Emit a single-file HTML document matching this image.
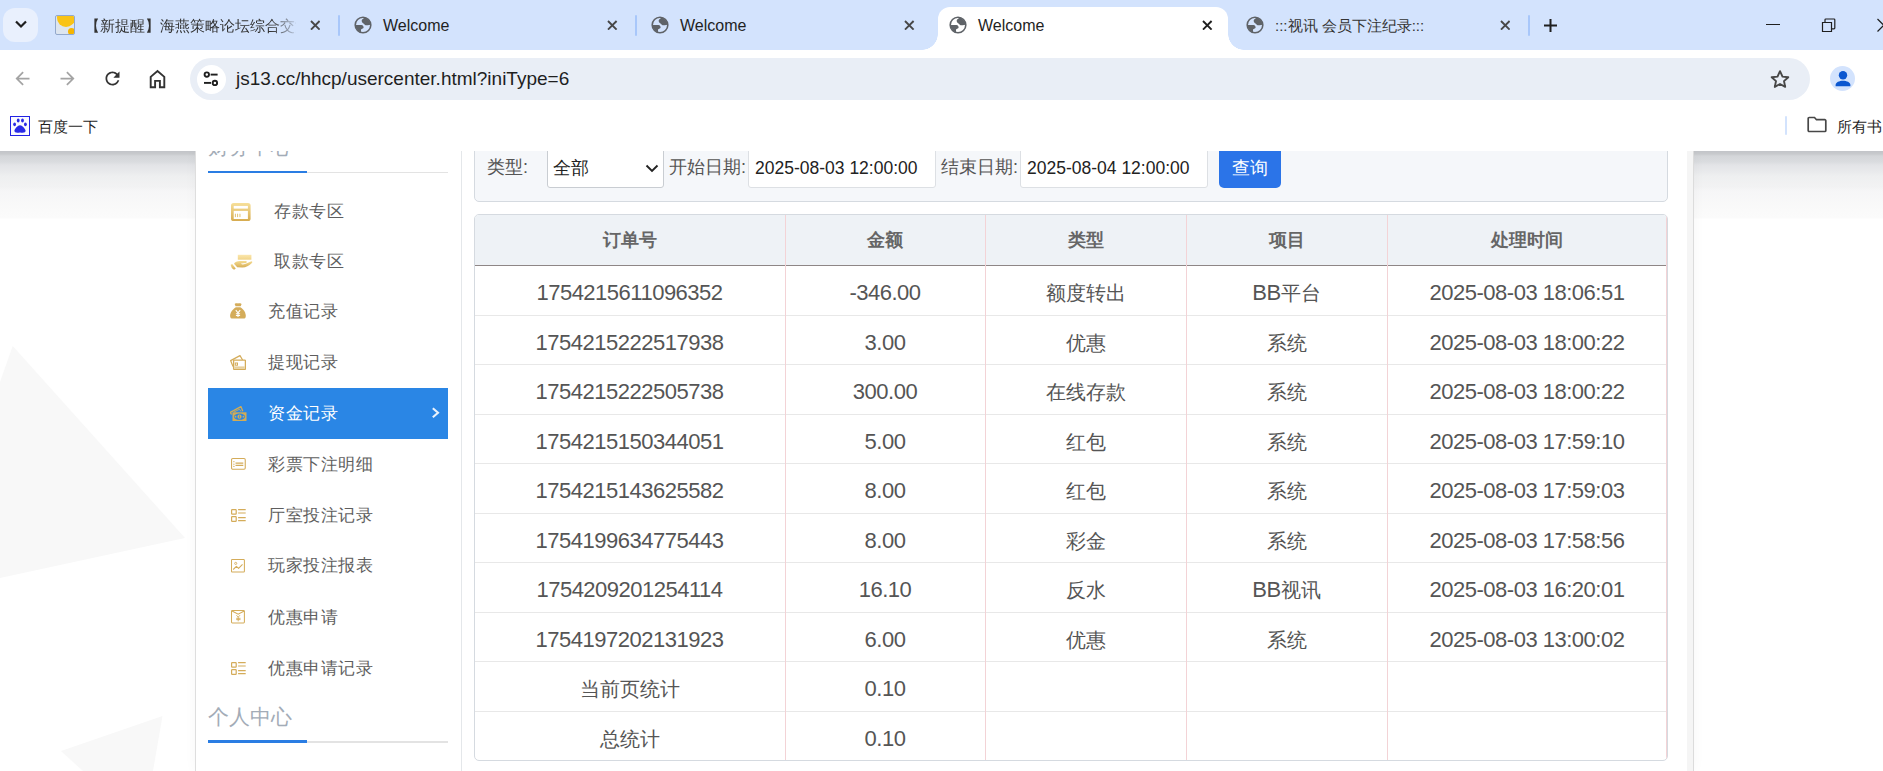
<!DOCTYPE html>
<html><head><meta charset="utf-8">
<style>
*{margin:0;padding:0;box-sizing:border-box}
html,body{width:1883px;height:771px;overflow:hidden;background:#fff;font-family:"Liberation Sans",sans-serif}
.abs{position:absolute}
#tabbar{position:absolute;left:0;top:0;width:1883px;height:50px;background:#d3e3fd}
.tabtxt{position:absolute;top:16px;font-size:16px;line-height:20px;color:#1f1f1f;white-space:nowrap}
.sep{position:absolute;top:15px;width:2px;height:21px;background:#a8c7fa;border-radius:1px}
#toolbar{position:absolute;left:0;top:50px;width:1883px;height:58px}
#omni{position:absolute;left:190px;top:58px;width:1620px;height:42px;border-radius:21px;background:#e9eef6}
#page{position:absolute;left:0;top:151px;width:1883px;height:620px;background:#fff;overflow:hidden}
.menu{position:absolute;font-size:17px;letter-spacing:0.6px;line-height:22px;color:#555;white-space:nowrap}
.cj{font-size:20px;letter-spacing:0}
.cell{position:absolute;text-align:center;font-size:22px;letter-spacing:-0.5px;line-height:24px;color:#555;white-space:nowrap}
</style></head><body>
<div id="tabbar">
<div class="abs" style="left:3px;top:8px;width:35px;height:34px;border-radius:12px;background:#e9f0fd"></div>
<svg class="abs" style="left:14px;top:19px" width="14" height="10" viewBox="0 0 14 10"><path d="M2 2.5 L7 7.5 L12 2.5" fill="none" stroke="#1f1f1f" stroke-width="2.2"/></svg>
<div class="abs" style="left:55px;top:15px;width:20px;height:20px;border:1px solid #93a9cc;border-radius:2px;background:#dde5ef;overflow:hidden">
<div class="abs" style="left:1px;top:-7px;width:18px;height:18px;border-radius:9px;background:#f9c316"></div>
<div class="abs" style="left:12px;top:12px;width:7px;height:7px;border-radius:4px;background:#f6b500"></div></div>
<div class="tabtxt" style="left:85px;font-size:15px;width:211px;color:#333;overflow:hidden;-webkit-mask-image:linear-gradient(90deg,#000 88%,rgba(0,0,0,0.15) 100%)">【新提醒】海燕策略论坛综合交流</div>
<svg class="abs" style="left:309.7px;top:19.7px" width="10.6" height="10.6" viewBox="0 0 10.6 10.6"><path d="M1 1L9.6 9.6M9.6 1L1 9.6" stroke="#474747" stroke-width="1.9"/></svg>
<div class="sep" style="left:338.3px"></div>
<svg class="abs" style="left:354.0px;top:16.0px" width="18" height="18" viewBox="0 0 18 18"><defs><clipPath id="gc"><circle cx="9" cy="9" r="7.6"/></clipPath></defs><circle cx="9" cy="9" r="7.8" fill="none" stroke="#5f6368" stroke-width="1.6"/><g clip-path="url(#gc)" fill="#5f6368"><path d="M9.8 0V2.3C9 3 7.8 3.4 7.7 4.6 7.6 6 8.6 7 9.5 7.5 10.3 8 10.8 9 11.7 9.2 12.8 9.5 14 9.3 15 9.1L18 8.5V0Z"/><path d="M0 9.1H7.5C8.8 9.3 9.6 10.3 9.6 11.5 9.6 12.3 8.8 12.6 8.2 12.7 7.3 12.9 7 13.4 7 14.2V18H0Z"/></g></svg>
<div class="tabtxt" style="left:383px">Welcome</div>
<svg class="abs" style="left:607.2px;top:19.7px" width="10.6" height="10.6" viewBox="0 0 10.6 10.6"><path d="M1 1L9.6 9.6M9.6 1L1 9.6" stroke="#474747" stroke-width="1.9"/></svg>
<svg class="abs" style="left:651.0px;top:16.0px" width="18" height="18" viewBox="0 0 18 18"><defs><clipPath id="gc"><circle cx="9" cy="9" r="7.6"/></clipPath></defs><circle cx="9" cy="9" r="7.8" fill="none" stroke="#5f6368" stroke-width="1.6"/><g clip-path="url(#gc)" fill="#5f6368"><path d="M9.8 0V2.3C9 3 7.8 3.4 7.7 4.6 7.6 6 8.6 7 9.5 7.5 10.3 8 10.8 9 11.7 9.2 12.8 9.5 14 9.3 15 9.1L18 8.5V0Z"/><path d="M0 9.1H7.5C8.8 9.3 9.6 10.3 9.6 11.5 9.6 12.3 8.8 12.6 8.2 12.7 7.3 12.9 7 13.4 7 14.2V18H0Z"/></g></svg>
<div class="tabtxt" style="left:680px">Welcome</div>
<svg class="abs" style="left:904.2px;top:19.7px" width="10.6" height="10.6" viewBox="0 0 10.6 10.6"><path d="M1 1L9.6 9.6M9.6 1L1 9.6" stroke="#474747" stroke-width="1.9"/></svg>
<div class="sep" style="left:635.4px"></div>
<div class="abs" style="left:938px;top:7px;width:290px;height:43px;background:#fff;border-radius:12px 12px 0 0"></div>
<div class="abs" style="left:922px;top:34px;width:16px;height:16px;background:radial-gradient(circle at 0 0, #d3e3fd 15.5px, #fff 16px)"></div>
<div class="abs" style="left:1228px;top:34px;width:16px;height:16px;background:radial-gradient(circle at 100% 0, #d3e3fd 15.5px, #fff 16px)"></div>
<svg class="abs" style="left:949.0px;top:16.0px" width="18" height="18" viewBox="0 0 18 18"><defs><clipPath id="gc"><circle cx="9" cy="9" r="7.6"/></clipPath></defs><circle cx="9" cy="9" r="7.8" fill="none" stroke="#5f6368" stroke-width="1.6"/><g clip-path="url(#gc)" fill="#5f6368"><path d="M9.8 0V2.3C9 3 7.8 3.4 7.7 4.6 7.6 6 8.6 7 9.5 7.5 10.3 8 10.8 9 11.7 9.2 12.8 9.5 14 9.3 15 9.1L18 8.5V0Z"/><path d="M0 9.1H7.5C8.8 9.3 9.6 10.3 9.6 11.5 9.6 12.3 8.8 12.6 8.2 12.7 7.3 12.9 7 13.4 7 14.2V18H0Z"/></g></svg>
<div class="tabtxt" style="left:978px">Welcome</div>
<svg class="abs" style="left:1202.1px;top:19.7px" width="10.6" height="10.6" viewBox="0 0 10.6 10.6"><path d="M1 1L9.6 9.6M9.6 1L1 9.6" stroke="#1f1f1f" stroke-width="1.9"/></svg>
<svg class="abs" style="left:1246.0px;top:16.0px" width="18" height="18" viewBox="0 0 18 18"><defs><clipPath id="gc"><circle cx="9" cy="9" r="7.6"/></clipPath></defs><circle cx="9" cy="9" r="7.8" fill="none" stroke="#5f6368" stroke-width="1.6"/><g clip-path="url(#gc)" fill="#5f6368"><path d="M9.8 0V2.3C9 3 7.8 3.4 7.7 4.6 7.6 6 8.6 7 9.5 7.5 10.3 8 10.8 9 11.7 9.2 12.8 9.5 14 9.3 15 9.1L18 8.5V0Z"/><path d="M0 9.1H7.5C8.8 9.3 9.6 10.3 9.6 11.5 9.6 12.3 8.8 12.6 8.2 12.7 7.3 12.9 7 13.4 7 14.2V18H0Z"/></g></svg>
<div class="tabtxt" style="left:1275px;font-size:15px;color:#333;top:15.5px">:::视讯 会员下注纪录:::</div>
<svg class="abs" style="left:1499.7px;top:19.7px" width="10.6" height="10.6" viewBox="0 0 10.6 10.6"><path d="M1 1L9.6 9.6M9.6 1L1 9.6" stroke="#474747" stroke-width="1.9"/></svg>
<div class="sep" style="left:1528.2px"></div>
<svg class="abs" style="left:1543px;top:18px" width="15" height="15" viewBox="0 0 15 15"><path d="M7.5 1V14M1 7.5H14" stroke="#1f1f1f" stroke-width="2"/></svg>
<div class="abs" style="left:1766px;top:24px;width:14px;height:1.2px;background:#1f1f1f"></div>
<svg class="abs" style="left:1820px;top:17px" width="17" height="16" viewBox="0 0 17 16"><path d="M2.5 5.5h9v9h-9z M5 5.5V2.8a0.8 0.8 0 0 1 .8-.8H14a0.8 0.8 0 0 1 .8.8v8.2a.8.8 0 0 1-.8.8h-2.5" fill="none" stroke="#1f1f1f" stroke-width="1.2"/></svg>
<svg class="abs" style="left:1876px;top:18px" width="16" height="15" viewBox="0 0 16 15"><path d="M1.5 1L14 13.5M14 1L1.5 13.5" stroke="#1f1f1f" stroke-width="1.2"/></svg>
</div>
<svg class="abs" style="left:12px;top:67.5px" width="21" height="21" viewBox="0 0 24 24"><path d="M20 11H7.83l5.59-5.59L12 4l-8 8 8 8 1.41-1.41L7.83 13H20v-2z" fill="#a4a4a4"/></svg>
<svg class="abs" style="left:56.5px;top:67.5px" width="21" height="21" viewBox="0 0 24 24"><path d="M12 4l-1.41 1.41L16.17 11H4v2h12.17l-5.58 5.59L12 20l8-8z" fill="#a4a4a4"/></svg>
<svg class="abs" style="left:102px;top:67.5px" width="21" height="21" viewBox="0 0 24 24"><path d="M17.65 6.35C16.2 4.9 14.21 4 12 4c-4.42 0-7.99 3.58-7.99 8s3.57 8 7.99 8c3.73 0 6.84-2.55 7.73-6h-2.08c-.82 2.33-3.04 4-5.65 4-3.31 0-6-2.69-6-6s2.69-6 6-6c1.66 0 3.14.69 4.22 1.78L13 11h7V4l-2.35 2.35z" fill="#333"/></svg>
<svg class="abs" style="left:148px;top:69px" width="19" height="20" viewBox="0 0 19 20"><path d="M2.7 18.2V7.9L9.5 2 16.3 7.9V18.2H11.9V11.9H7.1V18.2Z" fill="none" stroke="#333" stroke-width="1.9" stroke-linejoin="miter"/></svg>
</div>
<div id="omni"></div>
<div class="abs" style="left:196.5px;top:64.5px;width:29px;height:29px;border-radius:15px;background:#fff"></div>
<svg class="abs" style="left:202px;top:70px" width="18" height="18" viewBox="0 0 18 18"><circle cx="4.8" cy="4.6" r="2.2" fill="none" stroke="#1f1f1f" stroke-width="1.9"/><path d="M8.6 4.6H15.6" stroke="#1f1f1f" stroke-width="1.9"/><circle cx="12.9" cy="12.9" r="2.2" fill="none" stroke="#1f1f1f" stroke-width="1.9"/><path d="M2 12.9H9.1" stroke="#1f1f1f" stroke-width="1.9"/></svg>
<div class="abs" style="left:236px;top:68px;font-size:19px;line-height:22px;color:#1f1f1f;white-space:nowrap">js13.cc/hhcp/usercenter.html?iniType=6</div>
<svg class="abs" style="left:1769px;top:69px" width="22" height="21" viewBox="0 0 22 21"><path d="M11 2.2L13.5 7.6 19.3 8.2 15 12.1 16.2 17.9 11 15 5.8 17.9 7 12.1 2.7 8.2 8.5 7.6Z" fill="none" stroke="#474747" stroke-width="1.9" stroke-linejoin="round"/></svg>
<div class="abs" style="left:1830px;top:66px;width:25px;height:25px;border-radius:13px;background:#d3e3fd"></div>
<svg class="abs" style="left:1832.5px;top:66.5px" width="20" height="22" viewBox="0 0 20 22"><circle cx="10" cy="8.2" r="4.2" fill="#0b57d0"/><path d="M2.6 19.2v-1.3c0-2.6 3.8-4.2 7.4-4.2s7.4 1.6 7.4 4.2v1.3z" fill="#0b57d0"/></svg>
<div class="abs" style="left:10px;top:116px;width:20px;height:20px;border:1.6px solid #2222e4;background:#fafaff"></div>
<svg class="abs" style="left:10px;top:116px" width="20" height="20" viewBox="0 0 20 20"><ellipse cx="4.6" cy="8.3" rx="1.4" ry="1.9" fill="#2a2ae6"/><ellipse cx="8.2" cy="4.5" rx="1.4" ry="1.9" fill="#2a2ae6"/><ellipse cx="12.5" cy="4.5" rx="1.4" ry="1.9" fill="#2a2ae6"/><ellipse cx="15.4" cy="8.3" rx="1.4" ry="1.9" fill="#2a2ae6"/><path d="M10 9.2c-2 0-5.6 3.6-5.6 5.6 0 1.7 1.8 2.4 5.6 1.7 3.8.7 5.6 0 5.6-1.7 0-2-3.6-5.6-5.6-5.6z" fill="#2a2ae6"/></svg>
<div class="abs" style="left:38px;top:117px;font-size:15px;line-height:20px;color:#1f1f1f;white-space:nowrap">百度一下</div>
<div class="abs" style="left:1785px;top:116px;width:2px;height:19px;background:#d3e3fd;border-radius:1px"></div>
<svg class="abs" style="left:1806px;top:116px" width="22" height="18" viewBox="0 0 22 18"><path d="M2.2 2.5a1 1 0 0 1 1-1h5.3l2 2.2h8.3a1 1 0 0 1 1 1v9.8a1 1 0 0 1-1 1H3.2a1 1 0 0 1-1-1z" fill="none" stroke="#474747" stroke-width="1.7"/></svg>
<div class="abs" style="left:1837px;top:117px;font-size:15px;line-height:20px;color:#1f1f1f;white-space:nowrap">所有书</div>
<div id="page">
<div class="abs" style="left:0;top:0;width:1883px;height:68px;background:linear-gradient(#c2c4c8 0px,#c8cacd 3px,#d4d6d9 5px,#dadcdf 11px,#e3e4e7 14px,#e9eaec 21px,#eeeff0 25px,#f2f2f3 36px,#f6f6f7 40px,#fafafa 60px,#fbfbfb 67px,#fff 68px)"></div>
<svg class="abs" style="left:0;top:0" width="200" height="620" viewBox="0 151 200 620"><path d="M12.7 346L185 538L0 578L0 382Z" fill="#f8f8f8"/><path d="M61 751L162.5 716L149.7 790L103.9 790Z" fill="#f8f8f8"/></svg>
<div class="abs" style="left:195px;top:0;width:1499px;height:620px;background:#fff;border-left:1px solid #dedede;border-right:1px solid #dcdcdc;box-shadow:0 0 12px rgba(0,0,0,0.035)"></div>
<div class="abs" style="left:1687px;top:0;width:6px;height:620px;background:#f5f5f5"></div>
<div class="abs" style="left:461px;top:0;width:1px;height:620px;background:#e4e7ea"></div>
<div class="abs" style="left:208px;top:-16px;font-size:21px;line-height:24px;color:#a3acb7;white-space:nowrap">财务中心</div>
<div class="abs" style="left:208px;top:20.6px;width:240px;height:1.6px;background:#e3e3e3"></div>
<div class="abs" style="left:208px;top:19.8px;width:99px;height:2.4px;background:#2a7de3"></div>
<div class="abs" style="left:208px;top:553.5px;font-size:21px;line-height:24px;color:#a3acb7;white-space:nowrap">个人中心</div>
<div class="abs" style="left:208px;top:590.1px;width:240px;height:1.6px;background:#e3e3e3"></div>
<div class="abs" style="left:208px;top:589.3px;width:99px;height:2.4px;background:#2a7de3"></div>
<div class="abs" style="left:208px;top:237px;width:240px;height:51px;background:#2a86e5"></div>
<svg class="abs" style="left:431px;top:255px" width="9" height="13" viewBox="0 0 9 13"><path d="M1.8 2.3L7 6.8L1.8 11.3" fill="none" stroke="#eaf2fc" stroke-width="2.1"/></svg>
<div class="abs" style="left:231.3px;top:52.099999999999994px;line-height:0"><svg width="20" height="19" viewBox="0 0 20 19"><defs><linearGradient id="g1" x1="0" y1="0" x2="0" y2="1"><stop offset="0" stop-color="#f7e09a"/><stop offset="1" stop-color="#d6ab4f"/></linearGradient></defs><rect x="0" y="0" width="19.6" height="18.1" rx="2.6" fill="url(#g1)"/><rect x="2.7" y="2.9" width="14.2" height="2.7" fill="#fff"/><rect x="2.7" y="7.9" width="14.2" height="8.1" fill="#fff"/><rect x="3.9" y="10.5" width="0.9" height="3.7" rx="0.4" fill="#dcb95f"/><rect x="6.2" y="10.5" width="0.9" height="3.7" rx="0.4" fill="#dcb95f"/><rect x="8.5" y="10.5" width="0.9" height="3.7" rx="0.4" fill="#dcb95f"/></svg></div>
<div class="menu" style="left:274px;top:49.5px;color:#5e5e5e">存款专区</div>
<div class="abs" style="left:229.5px;top:102px;line-height:0"><svg width="23" height="18" viewBox="0 0 23 18"><defs><linearGradient id="g2" x1="0" y1="0" x2="0" y2="1"><stop offset="0" stop-color="#f5dc92"/><stop offset="1" stop-color="#d6ad55"/></linearGradient><linearGradient id="g3" x1="0" y1="0" x2="0" y2="1"><stop offset="0" stop-color="#fbe7ad"/><stop offset="1" stop-color="#f1d488"/></linearGradient></defs><rect x="7.8" y="1.8" width="13.6" height="4.9" fill="url(#g3)"/><path d="M4 10.8C5 8.9 7 8 10 8H15.8C17 8 17.2 9.6 16 9.9L11 10.6C11.6 11.6 13 11.7 15 11.1 17.5 10.3 19.8 8.6 21.8 8.3 22.6 8.7 22.4 9.6 21.6 10.3 19 12.6 16 14.6 12.5 14.6L7.2 14.2Z" fill="url(#g2)"/><path d="M0.7 11.7L2.2 10.9 5.8 15.4 4.6 16.6C3 16.8 1 14.3 0.7 11.7Z" fill="url(#g2)"/></svg></div>
<div class="menu" style="left:274px;top:100px;color:#5e5e5e">取款专区</div>
<div class="abs" style="left:230px;top:152px;line-height:0"><svg width="16" height="16" viewBox="0 0 16 16"><path d="M4.6 0.9C5.8 0.1 7.3 0.3 8 0.4 8.7 0.3 10.2 0.1 11.6 0.9L10.7 3.3H5.6Z" fill="#d4ac5a"/><path d="M5.9 4.3H10.3C13.6 6 15.8 9.8 15.8 12.9 15.8 15 14.8 15.6 13 15.6H3C1.2 15.6 0.1 15 0.1 12.9 0.1 9.8 2.6 6 5.9 4.3Z" fill="#d4ac5a"/><path d="M5.8 7.2L8 9.8 10.2 7.2M8 9.8V13.9M5.9 10.8H10.1M5.9 12.5H10.1" stroke="#fff" stroke-width="1.1" fill="none"/></svg></div>
<div class="menu" style="left:268px;top:149.5px;color:#5e5e5e">充值记录</div>
<div class="abs" style="left:230px;top:204px;line-height:0"><svg width="16" height="15" viewBox="0 0 16 15"><path d="M3 11.5L0.6 5.6 10 0.6 12.6 5" fill="none" stroke="#d4ac5a" stroke-width="1.2" stroke-linejoin="round"/><rect x="3.6" y="5.2" width="11.8" height="9.2" rx="0.6" fill="#fff" stroke="#d4ac5a" stroke-width="1.3"/><rect x="5.3" y="8" width="2.2" height="2.2" fill="none" stroke="#d4ac5a" stroke-width="1"/><rect x="4.3" y="11.4" width="10.4" height="2.4" fill="#e6cf9c"/></svg></div>
<div class="menu" style="left:268px;top:200.5px;color:#5e5e5e">提现记录</div>
<div class="abs" style="left:230px;top:254.5px;line-height:0"><svg width="17" height="16" viewBox="0 0 17 16"><path d="M1.6 8.5L0.3 6.4 10.9 0.6 12.8 5.2" fill="none" stroke="#d3ac54" stroke-width="1.3" stroke-linejoin="round"/><path d="M4 6L9.5 3.2 11 5.5" fill="none" stroke="#d3ac54" stroke-width="0.9"/><rect x="2.5" y="6.3" width="14" height="8.7" fill="#d3ac54"/><ellipse cx="9.5" cy="10.65" rx="5.6" ry="3.2" fill="#2a86e5"/><circle cx="9.5" cy="10.65" r="2.1" fill="#d3ac54"/><path d="M9.5 9.4V11.9" stroke="#2a86e5" stroke-width="0.7"/><circle cx="5.5" cy="10.65" r="0.9" fill="#d3ac54"/><circle cx="13.5" cy="10.65" r="0.9" fill="#d3ac54"/></svg></div>
<div class="menu" style="left:268px;top:251.5px;color:#fff">资金记录</div>
<div class="abs" style="left:230.9px;top:307.1px;line-height:0"><svg width="16" height="13" viewBox="0 0 16 13"><rect x="0.55" y="0.55" width="13.7" height="10.7" rx="1.2" fill="none" stroke="#d4ac5a" stroke-width="1.1"/><path d="M4.5 5.1H12.3M4.5 7.4H12.3" stroke="#d4ac5a" stroke-width="1.1"/><circle cx="2.9" cy="3.7" r="0.65" fill="#d4ac5a"/><circle cx="2.9" cy="6.2" r="0.65" fill="#d4ac5a"/><circle cx="2.9" cy="8.4" r="0.65" fill="#d4ac5a"/></svg></div>
<div class="menu" style="left:268px;top:303px;color:#5e5e5e">彩票下注明细</div>
<div class="abs" style="left:230.9px;top:357.9px;line-height:0"><svg width="16" height="14" viewBox="0 0 16 14"><rect x="0.6" y="0.6" width="4.6" height="4.6" rx="0.6" fill="none" stroke="#d4ac5a" stroke-width="1.2"/><rect x="0.6" y="7.6" width="4.6" height="4.8" rx="0.6" fill="none" stroke="#d4ac5a" stroke-width="1.2"/><path d="M7.1 0.7H14.7M7.1 4H14.7M7.1 8.6H14.7M7.1 11.6H14.7" stroke="#d4ac5a" stroke-width="1.2"/></svg></div>
<div class="menu" style="left:268px;top:353.5px;color:#5e5e5e">厅室投注记录</div>
<div class="abs" style="left:231px;top:408.1px;line-height:0"><svg width="15" height="14" viewBox="0 0 15 14"><rect x="0.5" y="0.5" width="12.9" height="12.5" rx="0.8" fill="none" stroke="#d4ac5a" stroke-width="1.05"/><path d="M2.2 10.5L5.4 7.4 7.6 9.4 11.5 5.4" fill="none" stroke="#d4ac5a" stroke-width="1.05" stroke-linejoin="round"/><circle cx="4.7" cy="4.4" r="1.05" fill="none" stroke="#d4ac5a" stroke-width="0.9"/></svg></div>
<div class="menu" style="left:268px;top:404px;color:#5e5e5e">玩家投注报表</div>
<div class="abs" style="left:231px;top:459.20000000000005px;line-height:0"><svg width="15" height="14" viewBox="0 0 15 14"><rect x="0.5" y="0.5" width="12.9" height="12.4" rx="0.8" fill="none" stroke="#d4ac5a" stroke-width="1.05"/><path d="M1 1L7.2 4.2 13.2 1" fill="none" stroke="#d4ac5a" stroke-width="1.05"/><path d="M5.4 5.2L7.2 7.1 9 5.2M7.2 7.1V11.3M5.2 8.3H9.5M5.2 9.6H9.5" fill="none" stroke="#d4ac5a" stroke-width="0.9"/></svg></div>
<div class="menu" style="left:268px;top:455.5px;color:#5e5e5e">优惠申请</div>
<div class="abs" style="left:230.9px;top:510.6px;line-height:0"><svg width="16" height="14" viewBox="0 0 16 14"><rect x="0.6" y="0.6" width="4.6" height="4.6" rx="0.6" fill="none" stroke="#d4ac5a" stroke-width="1.2"/><rect x="0.6" y="7.6" width="4.6" height="4.8" rx="0.6" fill="none" stroke="#d4ac5a" stroke-width="1.2"/><path d="M7.1 0.7H14.7M7.1 4H14.7M7.1 8.6H14.7M7.1 11.6H14.7" stroke="#d4ac5a" stroke-width="1.2"/></svg></div>
<div class="menu" style="left:268px;top:506.5px;color:#5e5e5e">优惠申请记录</div>
<div class="abs" style="left:474px;top:-10px;width:1194px;height:61px;background:#f5f7fa;border:1px solid #d5dae0;border-radius:5px"></div>
<div class="abs" style="left:487px;top:5px;font-size:18px;line-height:22px;color:#555;white-space:nowrap">类型:</div>
<div class="abs" style="left:547px;top:-10px;width:117px;height:47px;background:#fff;border:1px solid #c9cdd2;border-radius:3px"></div>
<div class="abs" style="left:553px;top:6px;font-size:18px;line-height:22px;color:#222;white-space:nowrap">全部</div>
<svg class="abs" style="left:645px;top:13px" width="14" height="9" viewBox="0 0 14 9"><path d="M1.5 1.5L7 7L12.5 1.5" fill="none" stroke="#222" stroke-width="1.9"/></svg>
<div class="abs" style="left:669px;top:5px;font-size:18px;line-height:22px;color:#555;white-space:nowrap">开始日期:</div>
<div class="abs" style="left:748px;top:-10px;width:188px;height:47px;background:#fff;border:1px solid #dde0e4;border-radius:3px"></div>
<div class="abs" style="left:755px;top:6px;font-size:17.5px;line-height:22px;color:#222;white-space:nowrap">2025-08-03 12:00:00</div>
<div class="abs" style="left:941px;top:5px;font-size:18px;line-height:22px;color:#555;white-space:nowrap">结束日期:</div>
<div class="abs" style="left:1020px;top:-10px;width:188px;height:47px;background:#fff;border:1px solid #dde0e4;border-radius:3px"></div>
<div class="abs" style="left:1027px;top:6px;font-size:17.5px;line-height:22px;color:#222;white-space:nowrap">2025-08-04 12:00:00</div>
<div class="abs" style="left:1219px;top:-10px;width:62px;height:47px;background:#2b74e8;border-radius:5px"></div>
<div class="abs" style="left:1232px;top:6px;font-size:18px;line-height:22px;color:#fff;white-space:nowrap">查询</div>
<div class="abs" style="left:474px;top:63px;width:1194px;height:547px;border:1px solid #d5dae0;border-radius:5px;overflow:hidden;background:#fff">
<div class="abs" style="left:0;top:0;width:1192px;height:50px;background:#eef2f6"></div>
<div class="abs" style="left:0;top:50px;width:1192px;height:1px;background:#8e8686"></div>
<div class="abs" style="left:0;top:99.5px;width:1192px;height:1px;background:#e8e8e8"></div>
<div class="abs" style="left:0;top:149.0px;width:1192px;height:1px;background:#e8e8e8"></div>
<div class="abs" style="left:0;top:198.5px;width:1192px;height:1px;background:#e8e8e8"></div>
<div class="abs" style="left:0;top:248.0px;width:1192px;height:1px;background:#e8e8e8"></div>
<div class="abs" style="left:0;top:297.5px;width:1192px;height:1px;background:#e8e8e8"></div>
<div class="abs" style="left:0;top:347.0px;width:1192px;height:1px;background:#e8e8e8"></div>
<div class="abs" style="left:0;top:396.5px;width:1192px;height:1px;background:#e8e8e8"></div>
<div class="abs" style="left:0;top:446.0px;width:1192px;height:1px;background:#e8e8e8"></div>
<div class="abs" style="left:0;top:495.5px;width:1192px;height:1px;background:#e8e8e8"></div>
<div class="abs" style="left:310px;top:0;width:1px;height:547px;background:#f3d3d6"></div>
<div class="abs" style="left:510px;top:0;width:1px;height:547px;background:#f3d3d6"></div>
<div class="abs" style="left:711px;top:0;width:1px;height:547px;background:#f3d3d6"></div>
<div class="abs" style="left:912px;top:0;width:1px;height:547px;background:#f3d3d6"></div>
<div class="abs" style="left:1191px;top:0;width:1px;height:547px;background:#f3d3d6"></div>
</div>
<div class="cell" style="left:474px;width:311px;top:77px;font-size:18.2px;letter-spacing:0;font-weight:bold;color:#666">订单号</div>
<div class="cell" style="left:785px;width:200px;top:77px;font-size:18.2px;letter-spacing:0;font-weight:bold;color:#666">金额</div>
<div class="cell" style="left:985px;width:201px;top:77px;font-size:18.2px;letter-spacing:0;font-weight:bold;color:#666">类型</div>
<div class="cell" style="left:1186px;width:201px;top:77px;font-size:18.2px;letter-spacing:0;font-weight:bold;color:#666">项目</div>
<div class="cell" style="left:1387px;width:280px;top:77px;font-size:18.2px;letter-spacing:0;font-weight:bold;color:#666">处理时间</div>
<div class="cell" style="left:474px;width:311px;top:130.0px">1754215611096352</div>
<div class="cell" style="left:785px;width:200px;top:130.0px">-346.00</div>
<div class="cell" style="left:985px;width:201px;top:130.0px"><span class="cj">额度转出</span></div>
<div class="cell" style="left:1186px;width:201px;top:130.0px">BB<span class="cj">平台</span></div>
<div class="cell" style="left:1387px;width:280px;top:130.0px">2025-08-03 18:06:51</div>
<div class="cell" style="left:474px;width:311px;top:179.5px">1754215222517938</div>
<div class="cell" style="left:785px;width:200px;top:179.5px">3.00</div>
<div class="cell" style="left:985px;width:201px;top:179.5px"><span class="cj">优惠</span></div>
<div class="cell" style="left:1186px;width:201px;top:179.5px"><span class="cj">系统</span></div>
<div class="cell" style="left:1387px;width:280px;top:179.5px">2025-08-03 18:00:22</div>
<div class="cell" style="left:474px;width:311px;top:229.0px">1754215222505738</div>
<div class="cell" style="left:785px;width:200px;top:229.0px">300.00</div>
<div class="cell" style="left:985px;width:201px;top:229.0px"><span class="cj">在线存款</span></div>
<div class="cell" style="left:1186px;width:201px;top:229.0px"><span class="cj">系统</span></div>
<div class="cell" style="left:1387px;width:280px;top:229.0px">2025-08-03 18:00:22</div>
<div class="cell" style="left:474px;width:311px;top:278.5px">1754215150344051</div>
<div class="cell" style="left:785px;width:200px;top:278.5px">5.00</div>
<div class="cell" style="left:985px;width:201px;top:278.5px"><span class="cj">红包</span></div>
<div class="cell" style="left:1186px;width:201px;top:278.5px"><span class="cj">系统</span></div>
<div class="cell" style="left:1387px;width:280px;top:278.5px">2025-08-03 17:59:10</div>
<div class="cell" style="left:474px;width:311px;top:328.0px">1754215143625582</div>
<div class="cell" style="left:785px;width:200px;top:328.0px">8.00</div>
<div class="cell" style="left:985px;width:201px;top:328.0px"><span class="cj">红包</span></div>
<div class="cell" style="left:1186px;width:201px;top:328.0px"><span class="cj">系统</span></div>
<div class="cell" style="left:1387px;width:280px;top:328.0px">2025-08-03 17:59:03</div>
<div class="cell" style="left:474px;width:311px;top:377.5px">1754199634775443</div>
<div class="cell" style="left:785px;width:200px;top:377.5px">8.00</div>
<div class="cell" style="left:985px;width:201px;top:377.5px"><span class="cj">彩金</span></div>
<div class="cell" style="left:1186px;width:201px;top:377.5px"><span class="cj">系统</span></div>
<div class="cell" style="left:1387px;width:280px;top:377.5px">2025-08-03 17:58:56</div>
<div class="cell" style="left:474px;width:311px;top:427.0px">1754209201254114</div>
<div class="cell" style="left:785px;width:200px;top:427.0px">16.10</div>
<div class="cell" style="left:985px;width:201px;top:427.0px"><span class="cj">反水</span></div>
<div class="cell" style="left:1186px;width:201px;top:427.0px">BB<span class="cj">视讯</span></div>
<div class="cell" style="left:1387px;width:280px;top:427.0px">2025-08-03 16:20:01</div>
<div class="cell" style="left:474px;width:311px;top:476.5px">1754197202131923</div>
<div class="cell" style="left:785px;width:200px;top:476.5px">6.00</div>
<div class="cell" style="left:985px;width:201px;top:476.5px"><span class="cj">优惠</span></div>
<div class="cell" style="left:1186px;width:201px;top:476.5px"><span class="cj">系统</span></div>
<div class="cell" style="left:1387px;width:280px;top:476.5px">2025-08-03 13:00:02</div>
<div class="cell" style="left:474px;width:311px;top:526.0px"><span class="cj">当前页统计</span></div>
<div class="cell" style="left:785px;width:200px;top:526.0px">0.10</div>
<div class="cell" style="left:474px;width:311px;top:575.5px"><span class="cj">总统计</span></div>
<div class="cell" style="left:785px;width:200px;top:575.5px">0.10</div>
</div>
</body></html>
